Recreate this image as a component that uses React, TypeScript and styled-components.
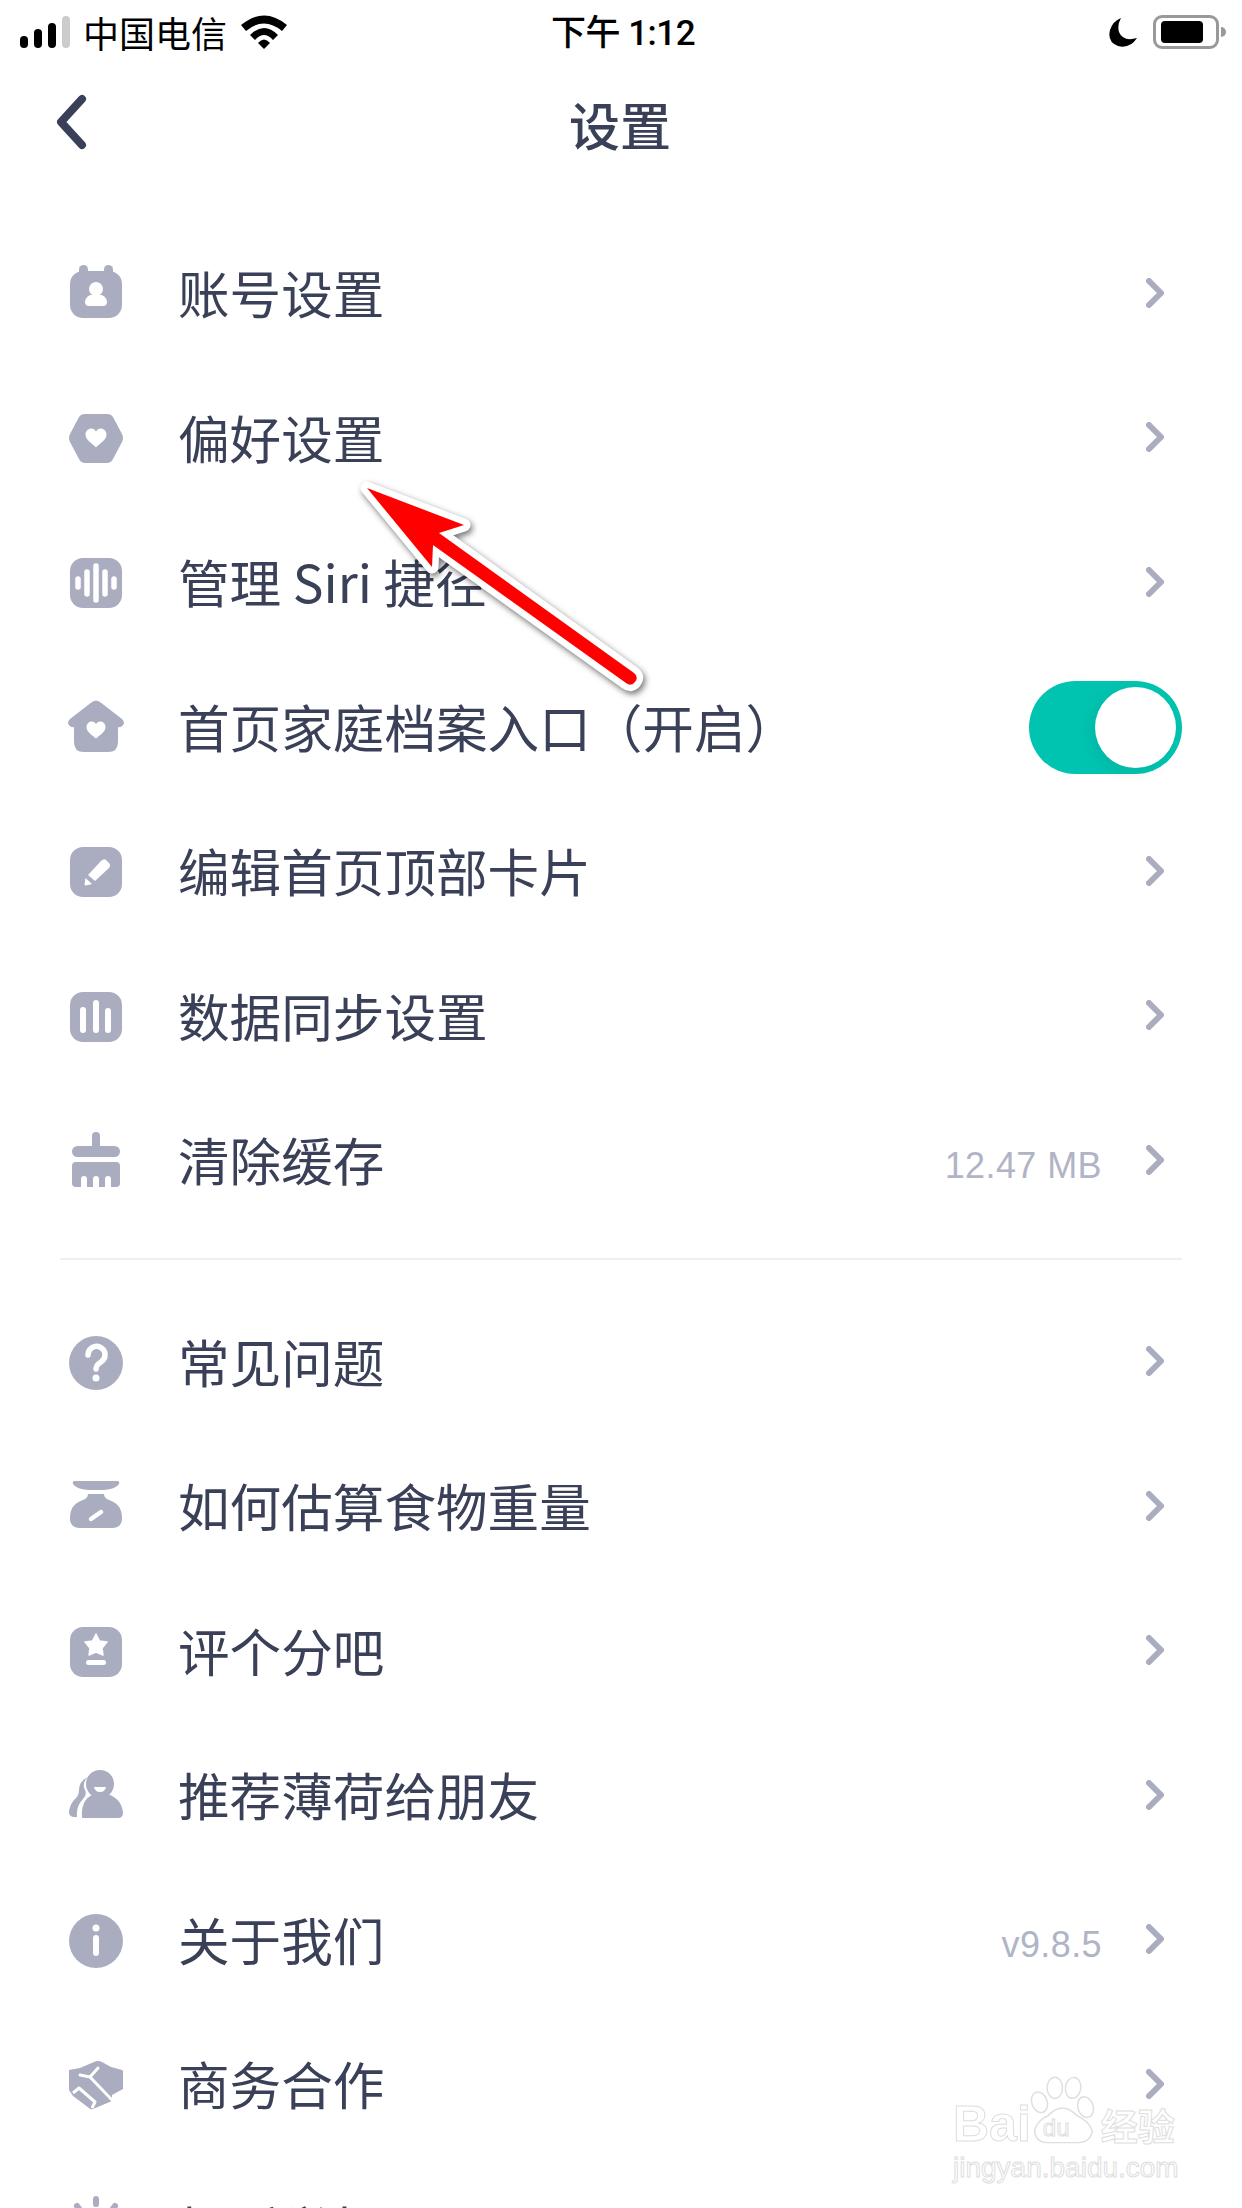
import React from "react";
import styled, { createGlobalStyle } from "styled-components";

const GREY = "#a9adbf";
const INK = "#3a4058";

const GlobalStyle = createGlobalStyle`
  html, body {
    margin: 0;
    padding: 0;
    background: #fff;
  }
  body {
    font-family: "Noto Sans CJK SC", "Noto Sans", sans-serif;
  }
`;

const Box = ({ children }: { children: React.ReactNode }) => (
  <IconSvg viewBox="0 0 60 60">{children}</IconSvg>
);

const Tile = ({ children }: { children: React.ReactNode }) => (
  <Box>
    <rect x="4" y="5" width="52" height="50" rx="13" fill={GREY} />
    {children}
  </Box>
);

const Heart = ({ x, y, s }: { x: number; y: number; s: number }) => (
  <path
    transform={`translate(${x} ${y}) scale(${s})`}
    d="M0 9 C-3 6 -10 2 -10 -3 C-10 -7 -7 -9 -4.500 -9 C-2.500 -9 -1 -8 0 -6 C1 -8 2.500 -9 4.500 -9 C7 -9 10 -7 10 -3 C10 2 3 6 0 9 Z"
    fill="#fff"
  />
);

const AccountIcon = () => (
  <Box>
    <rect x="13" y="1" width="9" height="14" rx="4.500" fill={GREY} />
    <rect x="38" y="1" width="9" height="14" rx="4.500" fill={GREY} />
    <rect x="4" y="7" width="52" height="47" rx="13" fill={GREY} />
    <circle cx="30" cy="25" r="7" fill="#fff" />
    <path d="M24 31 H36 Q41 34 41 38 Q41 42 37 42 H23 Q19 42 19 38 Q19 34 24 31 Z" fill="#fff" />
  </Box>
);

const PreferIcon = () => (
  <Box>
    <path
      d="M19 5 H41 Q45 5 47 8 L56 25 Q58 29 56 33 L47 50 Q45 54 41 54 H19 Q15 54 13 50 L4 33 Q2 29 4 25 L13 8 Q15 5 19 5 Z"
      fill={GREY}
    />
    <Heart x={30} y={29} s={1.050} />
  </Box>
);

const SiriIcon = () => (
  <Tile>
    <g stroke="#fff" strokeWidth="5.500" strokeLinecap="round">
      <line x1="12" y1="26" x2="12" y2="34" />
      <line x1="21" y1="19" x2="21" y2="41" />
      <line x1="30" y1="13" x2="30" y2="47" />
      <line x1="39" y1="19" x2="39" y2="41" />
      <line x1="48" y1="26" x2="48" y2="34" />
    </g>
  </Tile>
);

const HomeIcon = () => (
  <Box>
    <path
      d="M26 4 Q30 1 34 4 L56 21 Q60 25 56 28 Q54 30 52 29 V44 Q52 54 42 54 H18 Q8 54 8 44 V29 Q6 30 4 28 Q0 25 4 21 Z"
      fill={GREY}
    />
    <Heart x={30} y={32} s={0.95} />
  </Box>
);

const EditIcon = () => (
  <Tile>
    <path d="M22 33 L35 19 Q38 16 40 18 L43 21 Q45 23 43 26 L29 39 Z" fill="#fff" />
    <path d="M19.500 36 L26 42 L20 43.500 Q18.500 43.500 18.500 42 Z" fill="#fff" />
  </Tile>
);

const SyncIcon = () => (
  <Tile>
    <g stroke="#fff" strokeWidth="6" strokeLinecap="round">
      <line x1="17" y1="23" x2="17" y2="43" />
      <line x1="30" y1="16" x2="30" y2="43" />
      <line x1="42" y1="24" x2="42" y2="43" />
    </g>
  </Tile>
);

const BroomIcon = () => (
  <Box>
    <rect x="26" y="1" width="8" height="20" rx="4" fill={GREY} />
    <rect x="6" y="15" width="48" height="11" rx="5.500" fill={GREY} />
    <path d="M10 31 H50 Q54 31 54 35 V52 Q54 56 50 56 H10 Q6 56 6 52 V35 Q6 31 10 31 Z" fill={GREY} />
    <path d="M15 57 V48 Q15 45 18 45 Q21 45 21 48 V57 Z" fill="#fff" />
    <path d="M27 57 V48 Q27 45 30 45 Q33 45 33 48 V57 Z" fill="#fff" />
    <path d="M39 57 V48 Q39 45 42 45 Q45 45 45 48 V57 Z" fill="#fff" />
  </Box>
);

const HelpIcon = () => (
  <Box>
    <circle cx="30" cy="30" r="27" fill={GREY} />
    <path
      d="M22 22 A8.500 8.500 0 1 1 35 29 Q30 32 30 36"
      fill="none"
      stroke="#fff"
      strokeWidth="5.500"
      strokeLinecap="round"
    />
    <circle cx="30" cy="45" r="3.500" fill="#fff" />
  </Box>
);

const ScaleIcon = () => (
  <Box>
    <path d="M9 4 H51 Q54 4 53 7 Q50 12 38 13 H22 Q10 12 7 7 Q6 4 9 4 Z" fill={GREY} />
    <path
      d="M22 17 H38 Q38 21 43 23 Q56 27 56 41 Q56 51 46 51 H14 Q4 51 4 41 Q4 27 17 23 Q22 21 22 17 Z"
      fill={GREY}
    />
    <line x1="25" y1="42" x2="35" y2="35" stroke="#fff" strokeWidth="4.500" strokeLinecap="round" />
  </Box>
);

const StarIcon = () => (
  <Tile>
    <path
      d="M30 12 L33.500 19 L41 20 L36 26 L37 33 L30 30 L23 33 L24 26 L19 20 L26.500 19 Z"
      fill="#fff"
      stroke="#fff"
      strokeWidth="1.500"
      strokeLinejoin="round"
    />
    <rect x="20" y="38" width="20" height="5" rx="2.500" fill="#fff" />
  </Tile>
);

const FriendIcon = () => (
  <Box>
    <circle cx="34" cy="18" r="14" fill={GREY} />
    <path d="M16 52 Q14 30 34 26 Q56 30 57 47 Q57 52 52 52 H20 Q16 52 16 52 Z" fill={GREY} />
    <path d="M28 21 H40 Q39 26 34 26 Q29 26 28 21 Z" fill="#fff" />
    <path
      d="M22 11 Q13 15 13 24 Q13 30 8 34 Q3 40 3 47 Q4 51 8 51 H11 Q10 40 17 33 Q22 28 18 22 Q17 15 22 11 Z"
      fill={GREY}
    />
  </Box>
);

const InfoIcon = () => (
  <Box>
    <circle cx="30" cy="30" r="27" fill={GREY} />
    <circle cx="30" cy="17" r="3.500" fill="#fff" />
    <line x1="30" y1="27" x2="30" y2="42" stroke="#fff" strokeWidth="6" strokeLinecap="round" />
  </Box>
);

const HandshakeIcon = () => (
  <Box>
    <path
      d="M3 15 L14 13 L28 7 Q32 5 36 7 L45 12 L56 15 Q57 15 57 17 V34 L46 40 V46 L27 54 Q25 55 23 53 L7 41 L3 35 Z"
      fill={GREY}
    />
    <path
      d="M14 20 L24 22 L32 13 M24 22 L46 45"
      fill="none"
      stroke="#fff"
      strokeWidth="3"
      strokeLinejoin="round"
      strokeLinecap="round"
    />
    <path d="M7 38 L13 33 L29 47 L26 53" fill="none" stroke="#fff" strokeWidth="3" strokeLinejoin="round" />
  </Box>
);

const ReportIcon = () => (
  <Box>
    <g stroke={GREY} strokeWidth="6" strokeLinecap="round">
      <line x1="30" y1="-1" x2="30" y2="4" />
      <line x1="11" y1="6" x2="14" y2="10" />
      <line x1="49" y1="6" x2="46" y2="10" />
    </g>
    <path d="M14 28 A16 16 0 0 1 46 28 V46 H14 Z" fill={GREY} />
  </Box>
);

const group1 = [
  { icon: <AccountIcon />, label: "账号设置" },
  { icon: <PreferIcon />, label: "偏好设置" },
  { icon: <SiriIcon />, label: "管理 Siri 捷径" },
  { icon: <HomeIcon />, label: "首页家庭档案入口（开启）", on: true },
  { icon: <EditIcon />, label: "编辑首页顶部卡片" },
  { icon: <SyncIcon />, label: "数据同步设置" },
  { icon: <BroomIcon />, label: "清除缓存", value: "12.47 MB" },
];

const group2 = [
  { icon: <HelpIcon />, label: "常见问题" },
  { icon: <ScaleIcon />, label: "如何估算食物重量" },
  { icon: <StarIcon />, label: "评个分吧" },
  { icon: <FriendIcon />, label: "推荐薄荷给朋友" },
  { icon: <InfoIcon />, label: "关于我们", value: "v9.8.5" },
  { icon: <HandshakeIcon />, label: "商务合作" },
  { icon: <ReportIcon />, label: "投诉举报" },
];

type RowData = {
  icon: React.ReactNode;
  label: string;
  value?: string;
  on?: boolean;
};

const SettingRow = ({ icon, label, value, on }: RowData) => (
  <Row>
    {icon}
    <Label>{label}</Label>
    {value && <Value>{value}</Value>}
    {on ? (
      <Toggle>
        <Knob />
      </Toggle>
    ) : (
      <Chevron viewBox="0 0 18 30">
        <path
          d="M3 3 L15 15 L3 27"
          fill="none"
          stroke={GREY}
          strokeWidth="6"
          strokeLinecap="round"
          strokeLinejoin="round"
        />
      </Chevron>
    )}
  </Row>
);

const ARROW =
  "M27 18 L124 55 L99 63 L294 203 Q299 207 295 212 Q291 217 286 213 L93 75 L92 97 Z";

export default function App() {
  return (
    <Page>
      <GlobalStyle />
      <StatusBar>
        <StatusLeft>
          <Signal>
            <SignalBar $h={12} />
            <SignalBar $h={19} />
            <SignalBar $h={25} />
            <SignalBar $h={32} $off />
          </Signal>
          <span>中国电信</span>
          <svg width="46" height="34" viewBox="0 0 46 34">
            <path d="M0 10 Q23 -9 46 10 L41 16 Q23 1 5 16 Z" fill="#000" />
            <path d="M9 20 Q23 6 37 20 L32 25 Q23 15 14 25 Z" fill="#000" />
            <path d="M17 28 Q23 21 29 28 L23 34 Z" fill="#000" />
          </svg>
        </StatusLeft>
        <Clock>下午 1:12</Clock>
        <StatusRight>
          <svg width="28" height="29" viewBox="0 0 28 29">
            <path d="M12 0 Q4 3 1 12 Q-2 24 9 28 Q21 31 28 20 Q14 24 10 14 Q8 7 12 0 Z" fill="#000" />
          </svg>
          <Battery>
            <BatteryFill />
            <BatteryNub />
          </Battery>
        </StatusRight>
      </StatusBar>

      <NavBar>
        <BackButton viewBox="0 0 34 56">
          <path
            d="M27 5 L6 28 L27 51"
            fill="none"
            stroke={INK}
            strokeWidth="8"
            strokeLinecap="round"
            strokeLinejoin="round"
          />
        </BackButton>
        <Title>设置</Title>
      </NavBar>

      <List>
        <Group>
          {group1.map((row) => (
            <SettingRow key={row.label} {...row} />
          ))}
        </Group>
        <Divider />
        <Group>
          {group2.map((row) => (
            <SettingRow key={row.label} {...row} />
          ))}
        </Group>
      </List>

      <ArrowMark viewBox="0 0 320 230">
        <path d={ARROW} fill="#f00" stroke="#fff" strokeWidth="13" strokeLinejoin="round" />
        <path d={ARROW} fill="#f00" />
      </ArrowMark>

      <Watermark>
        <BrandLine>
          <BrandBai>Bai</BrandBai>
          <PawMark>
            <PawSvg viewBox="0 0 75 74">
              <ellipse cx="13" cy="30" rx="8" ry="11" transform="rotate(-20 13 30)" />
              <ellipse cx="29" cy="15" rx="8" ry="11" />
              <ellipse cx="48" cy="15" rx="8" ry="11" transform="rotate(8 48 15)" />
              <ellipse cx="61" cy="35" rx="8" ry="11" transform="rotate(-18 61 35)" />
              <path d="M8 58 Q12 48 22 44 Q37 28 52 44 Q65 50 68 60 Q66 72 52 72 H22 Q8 72 8 58 Z" />
            </PawSvg>
            <BrandDu>du</BrandDu>
          </PawMark>
          <BrandJy>经验</BrandJy>
        </BrandLine>
        <BrandUrl>jingyan.baidu.com</BrandUrl>
      </Watermark>
    </Page>
  );
}

const Page = styled.div`
  position: relative;
  width: 1242px;
  height: 2208px;
  overflow: hidden;
  background: #fff;
`;

const StatusBar = styled.div`
  display: grid;
  grid-template-columns: 1fr auto 1fr;
  align-items: center;
  height: 60px;
  padding: 0 16px 0 20px;
  color: #000;
  font-size: 36px;
`;

const StatusLeft = styled.div`
  display: flex;
  align-items: center;
  gap: 14px;
  line-height: 60px;

  > span {
    margin-left: -1px;
  }
`;

const Signal = styled.div`
  display: flex;
  align-items: flex-end;
  gap: 6px;
  height: 32px;
`;

const SignalBar = styled.div<{ $h: number; $off?: boolean }>`
  width: 8px;
  height: ${(p) => p.$h}px;
  border-radius: 4px;
  background: ${(p) => (p.$off ? "#ccc" : "#000")};
`;

const Clock = styled.div`
  font-family: Roboto, "Noto Sans CJK SC", sans-serif;
  font-weight: 500;
  font-size: 35px;
  letter-spacing: -0.5px;
  line-height: 60px;
  padding-top: 4px;
`;

const StatusRight = styled.div`
  display: flex;
  align-items: center;
  justify-content: flex-end;
  gap: 16px;
`;

const Battery = styled.div`
  position: relative;
  display: flex;
  align-items: center;
  box-sizing: border-box;
  width: 66px;
  height: 34px;
  padding: 0 5px;
  margin-right: 7px;
  border: 3px solid #999;
  border-radius: 9px;
`;

const BatteryFill = styled.div`
  width: 42px;
  height: 22px;
  border-radius: 4px;
  background: #000;
`;

const BatteryNub = styled.div`
  position: absolute;
  right: -10px;
  top: 9px;
  width: 5px;
  height: 10px;
  border-radius: 0 5px 5px 0;
  background: #999;
`;

const NavBar = styled.div`
  position: relative;
  display: flex;
  align-items: center;
  justify-content: center;
  height: 124px;
`;

const BackButton = styled.svg`
  position: absolute;
  left: 55px;
  top: 34px;
  width: 34px;
  height: 56px;
`;

const Title = styled.div`
  font-size: 51px;
  font-weight: 500;
  color: ${INK};
  padding-top: 3px;
  margin-left: -2px;
`;

const List = styled.div`
  padding-top: 38px;
`;

const Group = styled.div`
  display: flex;
  flex-direction: column;
`;

const Row = styled.div`
  display: flex;
  align-items: center;
  height: 144.5px;
  padding: 0 60px 0 66px;
`;

const IconSvg = styled.svg`
  flex: none;
  width: 60px;
  height: 60px;
  overflow: visible;
`;

const Label = styled.div`
  flex: 1;
  margin: -4px 0 0 52px;
  font-size: 51.6px;
  line-height: 60px;
  color: ${INK};
  white-space: nowrap;
`;

const Value = styled.div`
  font-family: "Liberation Sans", sans-serif;
  font-size: 36px;
  letter-spacing: 0.4px;
  color: #b0b4c5;
  margin-right: 44px;
  margin-top: 9px;
`;

const Chevron = styled.svg`
  flex: none;
  width: 18px;
  height: 30px;
  margin: -3px 18px 0 0;
`;

const Toggle = styled.div`
  display: flex;
  align-items: center;
  justify-content: flex-end;
  box-sizing: border-box;
  width: 153px;
  height: 93px;
  padding-right: 6px;
  border-radius: 47px;
  background: #00c4b0;
`;

const Knob = styled.div`
  width: 81px;
  height: 81px;
  border-radius: 50%;
  background: #fff;
  box-shadow: -4px 4px 14px rgba(0, 90, 80, 0.12);
`;

const Divider = styled.div`
  height: 2px;
  margin: 24px 60px 31px;
  background: #f0f0f3;
`;

const ArrowMark = styled.svg`
  position: absolute;
  left: 340px;
  top: 470px;
  width: 320px;
  height: 230px;
  overflow: visible;
  filter: drop-shadow(2px 3px 3px rgba(0, 0, 0, 0.55));
`;

const Watermark = styled.div`
  position: absolute;
  left: 953px;
  top: 2072px;
  display: flex;
  flex-direction: column;
  color: #fff;
  -webkit-text-stroke: 1px #dedede;
`;

const BrandLine = styled.div`
  display: flex;
  align-items: flex-end;
  height: 74px;
`;

const BrandBai = styled.span`
  font-family: "Liberation Sans", sans-serif;
  font-weight: 700;
  font-size: 50px;
  line-height: 50px;
  margin-bottom: -3px;
`;

const PawMark = styled.div`
  position: relative;
  width: 72px;
  height: 74px;
  margin-left: -4px;
`;

const PawSvg = styled.svg`
  width: 72px;
  height: 74px;
  fill: #fff;
  stroke: #dedede;
  stroke-width: 1.5;
`;

const BrandDu = styled.span`
  position: absolute;
  left: 16px;
  bottom: 6px;
  font-family: "Liberation Sans", sans-serif;
  font-size: 24px;
  line-height: 24px;
`;

const BrandJy = styled.span`
  font-weight: 700;
  font-size: 37px;
  line-height: 42px;
  margin-left: 2px;
`;

const BrandUrl = styled.div`
  font-family: "Liberation Sans", sans-serif;
  font-size: 28px;
  line-height: 32px;
  margin-top: 6px;
`;
